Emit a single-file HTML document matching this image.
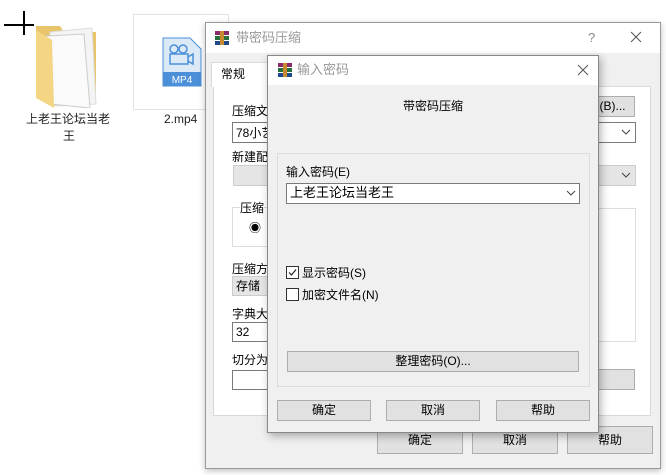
<!DOCTYPE html>
<html><head><meta charset="utf-8"><style>
*{box-sizing:border-box;margin:0;padding:0}
body{width:666px;height:475px;background:#fff;position:relative;overflow:hidden;font-family:"Liberation Sans","Microsoft YaHei","Noto Sans CJK SC",sans-serif;font-size:12px;color:#000}
.a{position:absolute}
.t{position:absolute;white-space:nowrap;line-height:14px}
.btn{position:absolute;background:#e1e1e1;border:1px solid #adadad;text-align:center;line-height:18px}
.inp{position:absolute;background:#fff;border:1px solid #7a7a7a}
.dd{position:absolute}
</style></head><body>
<div class="a" style="left:4px;top:24px;width:30px;height:2px;background:#000"></div>
<div class="a" style="left:23px;top:11px;width:2px;height:24px;background:#000"></div>
<svg class="a" style="left:34px;top:20px" width="66" height="88" viewBox="0 0 66 88">
<path d="M2 6 L26 6 L30 12 L62 12 L62 80 L18 86 L2 78 Z" fill="#e8c46a"/>
<path d="M16 12 L58 8 L62 84 L22 86 Z" fill="#f4f4f4" stroke="#ddd"/>
<path d="M12 16 L50 14 L56 88 L16 84 Z" fill="#fafafa" stroke="#ccc"/>
<path d="M2 10 L18 20 L20 88 L2 78 Z" fill="#f3d584"/>
</svg>
<div class="t" style="left:26px;top:112px;font-size:12px;color:#222">上老王论坛当老</div>
<div class="t" style="left:63px;top:129px;font-size:12px;color:#222">王</div>
<div class="a" style="left:133px;top:14px;width:96px;height:96px;border:1px solid #e3e3e3;background:#fff"></div>
<svg class="a" style="left:162px;top:37px" width="40" height="50" viewBox="0 0 40 50">
<path d="M1 1 L28 1 L39 12 L39 49 L1 49 Z" fill="#dceaf7" stroke="#4a90d9"/>
<rect x="1" y="35" width="38" height="14" fill="#4a8fd8"/>
<circle cx="12" cy="12" r="4" fill="none" stroke="#4a90d9" stroke-width="1.5"/><circle cx="21" cy="12" r="4" fill="none" stroke="#4a90d9" stroke-width="1.5"/>
<rect x="8" y="17" width="18" height="10" fill="none" stroke="#4a90d9" stroke-width="1.5"/><path d="M26 20 L31 17 L31 27 L26 24" fill="none" stroke="#4a90d9" stroke-width="1.5"/>
<text x="20" y="46" font-size="10" fill="#fff" text-anchor="middle" font-family="Liberation Sans">MP4</text>
</svg>
<div class="t" style="left:164px;top:112px;color:#222">2.mp4</div>

<div class="a" style="left:205px;top:22px;width:456px;height:447px;background:#f0f0f0;border:1px solid #999;box-shadow:0 2px 6px rgba(0,0,0,.25)"></div>
<div class="a" style="left:206px;top:23px;width:454px;height:30px;background:#fff"></div>
<svg class="a" style="left:214px;top:30px" width="16" height="16"><rect x="1" y="1" width="14" height="4" fill="#8b2a6a"/><rect x="1" y="6" width="14" height="4" fill="#2a6e3a"/><rect x="1" y="11" width="14" height="4" fill="#1d4a8a"/><rect x="6" y="1" width="4" height="14" fill="#c88a30"/></svg>
<div class="t" style="left:236px;top:31px;color:#999;font-size:13px">带密码压缩</div>
<div class="t" style="left:588px;top:31px;color:#888;font-size:13px">?</div>
<svg class="a" style="left:630px;top:31px" width="12" height="12"><path d="M1 1L11 11M11 1L1 11" stroke="#555" stroke-width="1"/></svg>
<div class="a" style="left:213px;top:86px;width:438px;height:330px;background:#fff;border:1px solid #d9d9d9"></div>
<div class="a" style="left:211px;top:62px;width:58px;height:25px;background:#fff;border:1px solid #d9d9d9;border-bottom:none"></div>
<div class="t" style="left:221px;top:67px">常规</div>
<div class="t" style="left:232px;top:104px">压缩文</div>
<div class="inp" style="left:232px;top:122px;width:60px;height:21px"></div><div class="t" style="left:236px;top:126px">78小艺</div>
<div class="t" style="left:232px;top:150px">新建配</div>
<div class="a" style="left:233px;top:165px;width:60px;height:21px;background:#e5e5e5;border:1px solid #ccc"></div>
<div class="a" style="left:232px;top:207px;width:60px;height:40px;border:1px solid #dcdcdc"></div>
<div class="t" style="left:240px;top:201px;background:#fff">压缩</div>
<div class="t" style="left:249px;top:221px">◉</div>
<div class="t" style="left:232px;top:262px">压缩方</div>
<div class="a" style="left:232px;top:276px;width:60px;height:20px;background:#e5e5e5;border:1px solid #ccc"></div><div class="t" style="left:236px;top:279px">存储</div>
<div class="t" style="left:232px;top:307px">字典大</div>
<div class="inp" style="left:232px;top:322px;width:60px;height:20px"></div><div class="t" style="left:236px;top:325px">32</div>
<div class="t" style="left:232px;top:353px">切分为</div>
<div class="inp" style="left:232px;top:370px;width:60px;height:20px"></div>
<div class="btn" style="left:590px;top:96px;width:45px;height:21px">(B)...</div>
<div class="inp" style="left:590px;top:122px;width:46px;height:21px"></div>
<svg class="dd" style="left:621px;top:129px" width="10" height="6"><path d="M1 1L5 5L9 1" stroke="#444" fill="none"/></svg>
<div class="a" style="left:590px;top:165px;width:46px;height:21px;background:#e5e5e5;border:1px solid #ccc"></div>
<svg class="dd" style="left:621px;top:172px" width="10" height="6"><path d="M1 1L5 5L9 1" stroke="#444" fill="none"/></svg>
<div class="a" style="left:590px;top:208px;width:46px;height:134px;background:#fff;border:1px solid #ddd"></div>
<div class="a" style="left:590px;top:369px;width:45px;height:21px;background:#e1e1e1;border:1px solid #adadad"></div>
<div class="btn" style="left:377px;top:426px;width:86px;height:28px;line-height:26px">确定</div>
<div class="btn" style="left:472px;top:426px;width:86px;height:28px;line-height:26px">取消</div>
<div class="btn" style="left:567px;top:426px;width:86px;height:28px;line-height:26px">帮助</div>

<div class="a" style="left:267px;top:55px;width:332px;height:378px;background:#f0f0f0;border:1px solid #888;box-shadow:2px 3px 8px rgba(0,0,0,.3)"></div>
<div class="a" style="left:268px;top:56px;width:330px;height:29px;background:#fff"></div>
<svg class="a" style="left:277px;top:62px" width="16" height="16"><rect x="1" y="1" width="14" height="4" fill="#8b2a6a"/><rect x="1" y="6" width="14" height="4" fill="#2a6e3a"/><rect x="1" y="11" width="14" height="4" fill="#1d4a8a"/><rect x="6" y="1" width="4" height="14" fill="#c88a30"/></svg>
<div class="t" style="left:297px;top:63px;color:#999;font-size:13px">输入密码</div>
<svg class="a" style="left:577px;top:64px" width="12" height="12"><path d="M1 1L11 11M11 1L1 11" stroke="#555" stroke-width="1"/></svg>
<div class="t" style="left:403px;top:99px;font-size:12px">带密码压缩</div>
<div class="a" style="left:277px;top:153px;width:313px;height:234px;border:1px solid #dcdcdc"></div>
<div class="t" style="left:286px;top:165px">输入密码(E)</div>
<div class="inp" style="left:286px;top:183px;width:294px;height:21px"></div>
<div class="t" style="left:290px;top:186px;font-size:13px">上老王论坛当老王</div>
<svg class="dd" style="left:566px;top:190px" width="10" height="6"><path d="M1 1L5 5L9 1" stroke="#444" fill="none"/></svg>
<div class="a" style="left:286px;top:266px;width:13px;height:13px;border:1px solid #333;background:#fff"></div>
<svg class="a" style="left:287px;top:267px" width="11" height="11"><path d="M2 5.5L4.5 8L9 2.5" stroke="#222" fill="none" stroke-width="1.2"/></svg>
<div class="t" style="left:302px;top:266px">显示密码(S)</div>
<div class="a" style="left:286px;top:288px;width:13px;height:13px;border:1px solid #333;background:#fff"></div>
<div class="t" style="left:302px;top:288px">加密文件名(N)</div>
<div class="btn" style="left:287px;top:351px;width:292px;height:21px">整理密码(O)...</div>
<div class="btn" style="left:277px;top:400px;width:94px;height:21px">确定</div>
<div class="btn" style="left:386px;top:400px;width:94px;height:21px">取消</div>
<div class="btn" style="left:496px;top:400px;width:94px;height:21px">帮助</div>
</body></html>
